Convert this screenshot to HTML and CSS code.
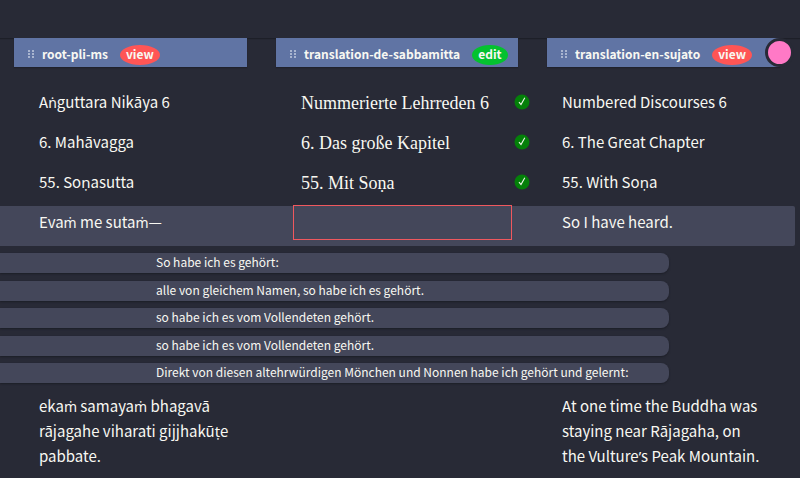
FILE: index.html
```html
<!DOCTYPE html>
<html lang="en">
<head>
<meta charset="utf-8">
<title>Translation editor</title>
<link rel="stylesheet" href="styles.css">
</head>
<body>
<svg class="sprite" aria-hidden="true">
  <symbol id="grip" viewBox="0 0 6 9">
    <path d="M0 0h2v2H0zM4 0h2v2H4zM0 3h2v2H0zM4 3h2v2H4zM0 6h2v2H0zM4 6h2v2H4z"/>
  </symbol>
  <symbol id="done" viewBox="0 0 16 16">
    <circle cx="8" cy="8" r="7.5" fill="#048009"/>
    <path d="M5 8.2L7 10.6L10.8 3.8" fill="none" stroke="#f3f8ee" stroke-width="1.1"/>
  </symbol>
</svg>
<div class="topbar"></div>
<header class="heads">
  <div class="head"><svg class="grip"><use href="#grip"/></svg><h2>root-pli-ms</h2><span class="badge">view</span></div>
  <div class="head"><svg class="grip"><use href="#grip"/></svg><h2>translation-de-sabbamitta</h2><span class="badge edit">edit</span></div>
  <div class="head"><svg class="grip"><use href="#grip"/></svg><h2>translation-en-sujato</h2><span class="badge">view</span><button class="dot" aria-label="Add column"></button></div>
</header>
<main>
  <section class="row">
    <p lang="pi">A<span class="latin">ṅ</span>guttara Nikāya 6</p>
    <p lang="de" class="target">Nummerierte Lehrreden 6</p>
    <svg class="done"><use href="#done"/></svg>
    <p>Numbered Discourses 6</p>
  </section>
  <section class="row">
    <p lang="pi">6. Mahāvagga</p>
    <p lang="de" class="target">6. Das große Kapitel</p>
    <svg class="done"><use href="#done"/></svg>
    <p>6. The Great Chapter</p>
  </section>
  <section class="row">
    <p lang="pi">55. Soṇasutta</p>
    <p lang="de" class="target">55. Mit Soṇa</p>
    <svg class="done"><use href="#done"/></svg>
    <p>55. With Soṇa</p>
  </section>
  <section class="row active">
    <p lang="pi">Eva<span class="latin">ṁ</span> me suta<span class="latin">ṁ</span>—</p>
    <textarea class="entry" rows="1" lang="de" aria-label="Translation"></textarea>
    <p class="third">So I have heard.</p>
  </section>
  <ul class="hints" lang="de">
    <li>So habe ich es gehört:</li>
    <li>alle von gleichem Namen, so habe ich es gehört.</li>
    <li>so habe ich es vom Vollendeten gehört.</li>
    <li>so habe ich es vom Vollendeten gehört.</li>
    <li>Direkt von diesen altehrwürdigen Mönchen und Nonnen habe ich gehört und gelernt:</li>
  </ul>
  <section class="row last">
    <p lang="pi">eka<span class="latin">ṁ</span> samaya<span class="latin">ṁ</span> bhagavā rājagahe viharati gijjhakūṭe pabbate.</p>
    <p class="third">At one time the Buddha was staying near Rājagaha, on the Vulture<span class="latin">’</span>s Peak Mountain.</p>
  </section>
</main>
</body>
</html>
```
FILE: styles.css
```css
* { box-sizing: border-box; }

body {
  margin: 0;
  background: #282a36;
  color: #f8f8f2;
  font: 15px/25px "Noto Sans CJK SC", "Noto Sans", sans-serif;
  overflow-x: hidden;
}

p, h2, ul { margin: 0; padding: 0; }

.sprite { display: none; }

.topbar {
  height: 38px;
  box-shadow: 0 1px 1px #1d1f28;
}

.heads {
  display: grid;
  grid-template-columns: 233fr 242fr 233fr;
  column-gap: 29px;
  padding: 0 20px 0 14px;
}

.head {
  position: relative;
  display: flex;
  align-items: center;
  height: 29px;
  padding: 4px 0 0 14px;
  background: #6074a4;
  box-shadow: 0 1px 1px #20222c;
}

.head h2,
.badge {
  padding-bottom: 2px;
  font-size: 12px;
  line-height: 18px;
  font-weight: 700;
}

.head h2 {
  margin: 0 12px 0 8px;
  white-space: nowrap;
}

.badge {
  padding: 0 6px 2px;
  border-radius: 50%;
  background: #ff5555;
}

.badge.edit { background: #04c22f; }

.grip {
  width: 6px;
  height: 9px;
  fill: #a9b5d0;
  flex: none;
}

.dot {
  position: absolute;
  top: 0;
  right: -14px;
  width: 29px;
  height: 29px;
  padding: 0;
  border: 3px solid #282a36;
  border-radius: 50%;
  background: #ff79c6;
}

main { padding-top: 19px; }

.row {
  display: grid;
  grid-template-columns: 262fr 213fr 48fr 200fr;
  align-items: start;
  min-height: 40px;
  margin-right: 5px;
  padding: 3px 33px 8px 39px;
  border-radius: 0 2px 2px 0;
}

.row.last { padding-bottom: 0; }

.row p:first-child { padding-right: 62px; }

.row .third { grid-column: 4; }

/* Dotted Pali letters and the apostrophe, which the CJK face lacks or sets full width */
.latin { font-family: "Noto Sans", sans-serif; font-size: 14px; line-height: 1; }

.target {
  font-family: "Liberation Serif", serif;
  font-size: 18px;
  line-height: 29px;
  white-space: nowrap;
}

.done { width: 16px; height: 16px; margin-top: 5px; }

.active { background: #44475a; }

.entry {
  width: calc(100% + 6px);
  height: 35px;
  margin: -4px 0 -6px -8px;
  padding: 5px 8px;
  border: 0;
  outline: 0;
  background: transparent;
  box-shadow: inset 0 0 0 1px #f0585e;
  color: inherit;
  font: 18px/25px "Liberation Serif", serif;
  resize: none;
}

.hints {
  display: flex;
  flex-direction: column;
  justify-content: space-between;
  width: 669px;
  max-width: 100%;
  height: 130px;
  margin: 7px 0;
  list-style: none;
}

.hints li {
  padding: 0 0 2px 156px;
  border-radius: 0 8px 8px 0;
  background: #44475a;
  box-shadow: 0 1px 2px #1c1e27;
  font-size: 12px;
  line-height: 18px;
}
```
